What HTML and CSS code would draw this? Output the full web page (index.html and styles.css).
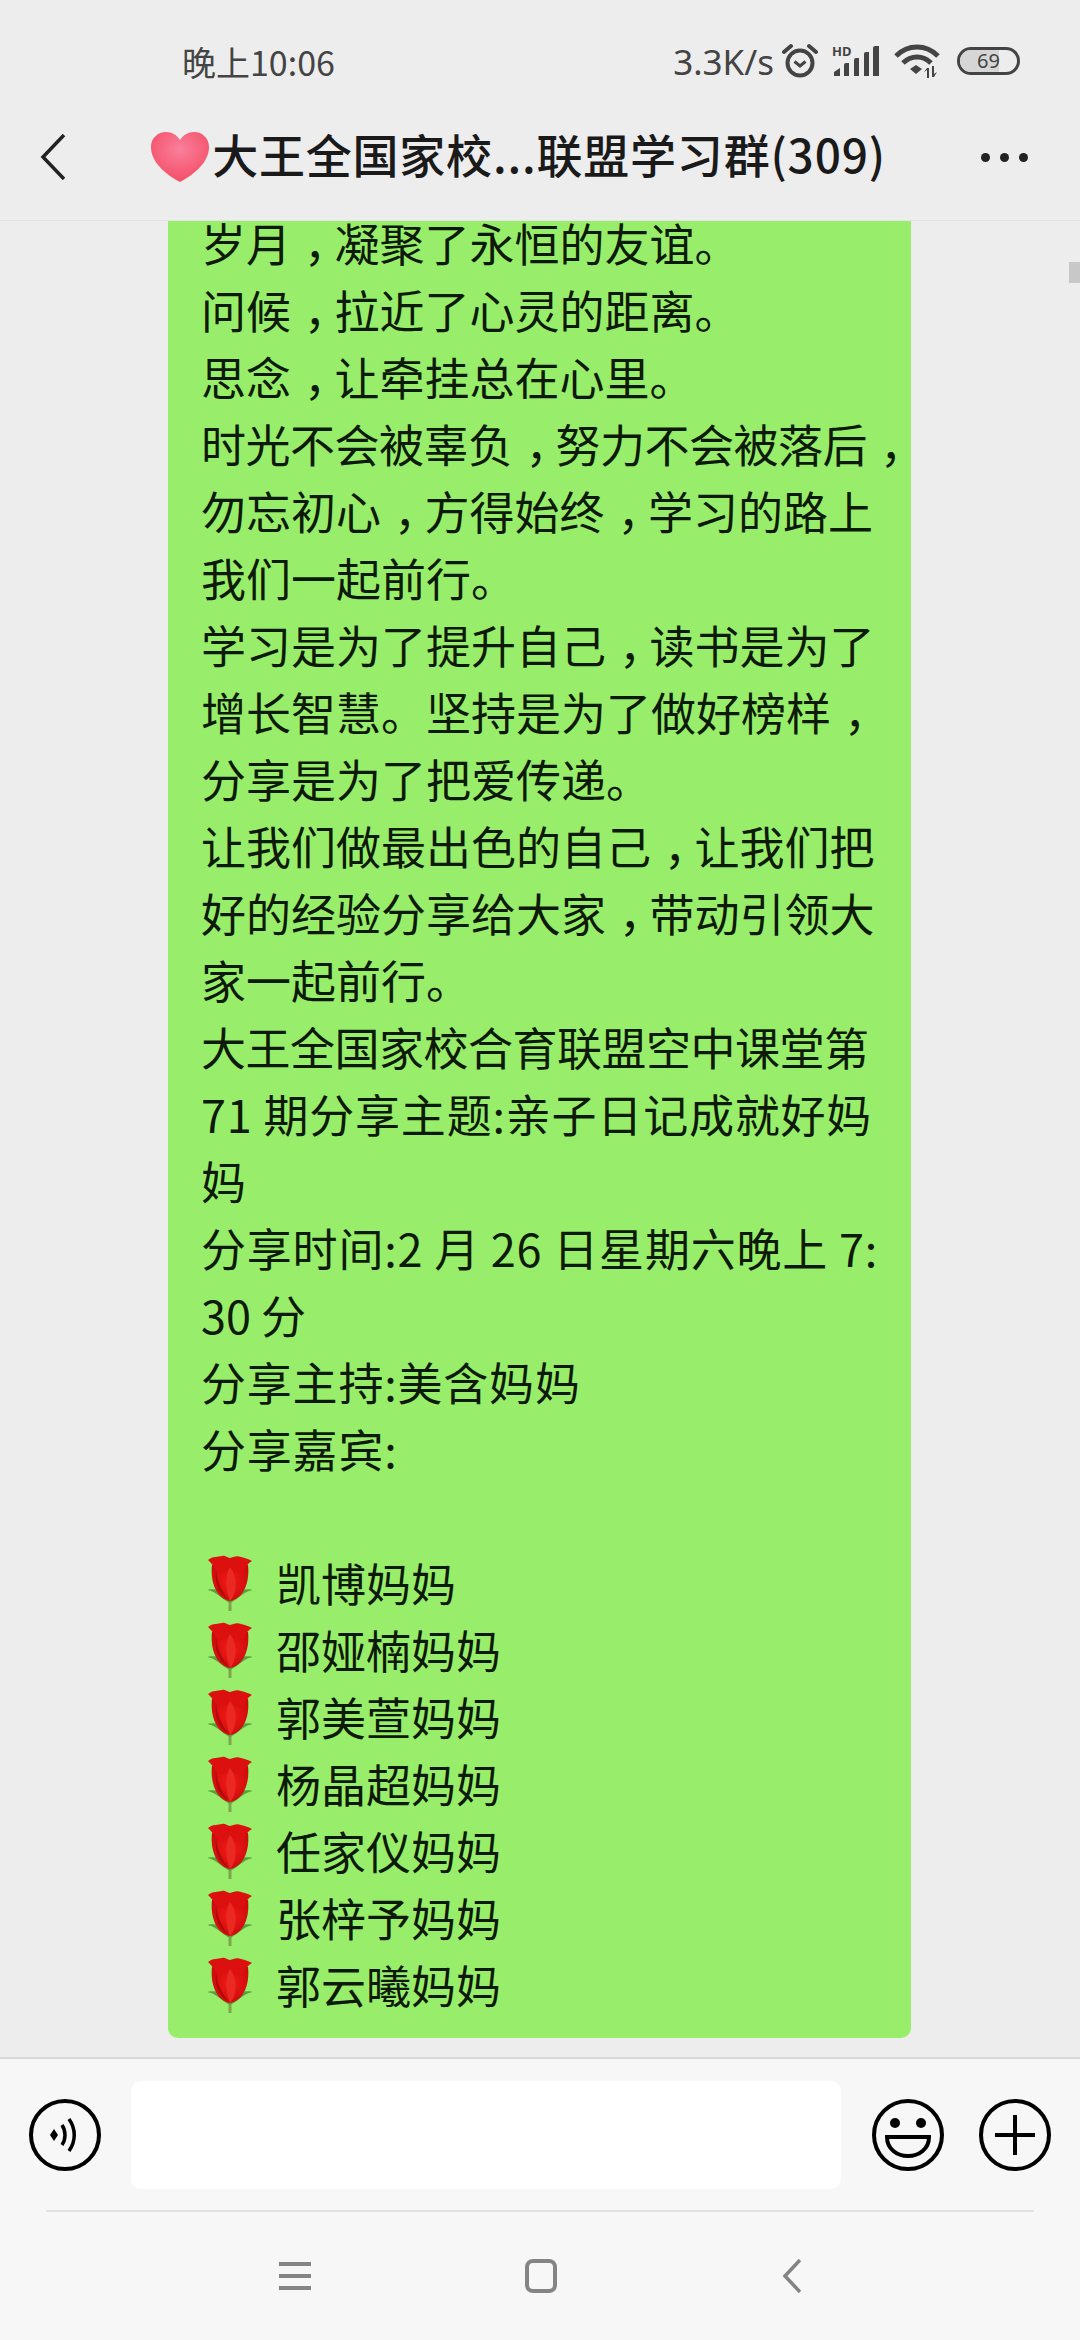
FILE: index.html
```html
<!DOCTYPE html>
<html lang="zh-CN">
<head>
  <meta charset="UTF-8">
  <meta name="viewport" content="width=device-width, initial-scale=1.0">
  <title>大王全国家校合育联盟学习群</title>
  <link rel="stylesheet" href="styles.css">
</head>
<body>
  <svg class="defs" width="0" height="0">
    <defs>
      <radialGradient id="petal" cx="50%" cy="45%" r="60%">
        <stop offset="0" stop-color="#f41a16"/>
        <stop offset="1" stop-color="#c80c0c"/>
      </radialGradient>
      <radialGradient id="heartFill" cx="50%" cy="35%" r="65%">
        <stop offset="0" stop-color="#f9809c"/>
        <stop offset="1" stop-color="#f54d66"/>
      </radialGradient>
      <symbol id="rose" viewBox="0 0 44 56">
        <path d="M22 56V42" stroke="#7fa64a" stroke-width="3" fill="none"/>
        <path d="M-1 35C8 36 14 44 22 48C30 44 36 36 45 35C36 33 30 36 22 38C14 36 8 33 -1 35Z" fill="#5aa040"/>
        <path d="M4 10C2 28 9 44 22 46C35 44 42 28 40 10Z" fill="url(#petal)"/>
        <path d="M0 5C5 1 10 2 14 1C17 0 19 3 22 3C25 2 29 0 33 2C37 3 41 4 44 6C40 8 38 11 36 16C30 20 26 18 22 12C18 18 12 20 8 15C6 11 3 8 0 5Z" fill="#dd1010"/>
        <path d="M22 12C17 20 17 34 22 46C29 38 30 22 22 12Z" fill="#ea2a22"/>
        <path d="M8 15C9 24 12 34 20 44C11 40 6 28 8 15Z" fill="#b00a0a"/>
      </symbol>
    </defs>
  </svg>

  <div class="phone">
    <header class="topbar">
      <div class="status">
        <span class="time">晚上10:06</span>
        <div class="status-right">
          <span class="speed">3.3K/s</span>
          <svg class="ic-alarm" width="36" height="36" viewBox="0 0 36 36">
            <circle cx="18" cy="20" r="12.5" fill="none" stroke="#444" stroke-width="4"/>
            <path d="M12.5 18.5L18 23L23.5 18.5" fill="none" stroke="#444" stroke-width="3"/>
            <path d="M2 9L9 3M34 9L27 3" stroke="#444" stroke-width="4" stroke-linecap="round"/>
          </svg>
          <svg class="ic-signal" width="48" height="32" viewBox="0 0 48 32">
            <text class="hd" x="0" y="11">HD</text>
            <path d="M2 31V27L8 23V31ZM12 31V20Q12 18 14 18H17V31ZM22 31V15Q22 13 24 13H27V31ZM32 31V9Q32 7 34 7H37V31ZM41 31V3Q41 1 43 1H47V31Z" fill="#444"/>
          </svg>
          <svg class="ic-wifi" width="46" height="34" viewBox="0 0 46 34">
            <path d="M2 12C14 0 32 0 44 12M9 19C17 11 29 11 37 19" fill="none" stroke="#444" stroke-width="5"/>
            <path d="M16 25L22 21L28 25L22 30Z" fill="#444"/>
            <path d="M33 34V26L30 28L33 24H35V34ZM38 22H40V30L43 28L40 33H38Z" fill="#444"/>
          </svg>
          <div class="battery"><span class="battery-level"></span><span class="battery-num">69</span></div>
        </div>
      </div>
      <div class="titlebar">
        <svg class="ic-back" width="26" height="46" viewBox="0 0 26 46">
          <path d="M24 1L3 23L24 45" fill="none" stroke="#222" stroke-width="3.5"/>
        </svg>
        <div class="title">
          <svg class="ic-heart" width="58" height="50" viewBox="0 0 58 50">
            <path d="M29 50C18 44 0 32 0 15C0 6 7 0 15 0C21 0 26 3 29 8C32 3 37 0 43 0C51 0 58 6 58 15C58 32 40 44 29 50Z" fill="url(#heartFill)"/>
          </svg>
          <span class="title-text">大王全国家校...联盟学习群(309)</span>
        </div>
        <div class="more"><i></i><i></i><i></i></div>
      </div>
    </header>

    <main class="chat">
      <div class="scrollbar"></div>
      <div class="bubble">
        <div>岁月<span class="comma">，</span>凝聚了永恒的友谊。</div>
        <div>问候<span class="comma">，</span>拉近了心灵的距离。</div>
        <div>思念<span class="comma">，</span>让牵挂总在心里。</div>
        <div class="tight">时光不会被辜负<span class="comma">，</span>努力不会被落后<span class="comma">，</span></div>
        <div>勿忘初心<span class="comma">，</span>方得始终<span class="comma">，</span>学习的路上</div>
        <div>我们一起前行。</div>
        <div>学习是为了提升自己<span class="comma">，</span>读书是为了</div>
        <div>增长智慧。坚持是为了做好榜样<span class="comma">，</span></div>
        <div>分享是为了把爱传递。</div>
        <div>让我们做最出色的自己<span class="comma">，</span>让我们把</div>
        <div>好的经验分享给大家<span class="comma">，</span>带动引领大</div>
        <div>家一起前行。</div>
        <div class="tight">大王全国家校合育联盟空中课堂第</div>
        <div class="spaced">71 期分享主题:亲子日记成就好妈</div>
        <div>妈</div>
        <div class="spaced">分享时间:2 月 26 日星期六晚上 7:</div>
        <div>30 分</div>
        <div class="spaced">分享主持:美含妈妈</div>
        <div class="spaced">分享嘉宾:</div>
        <div class="blank"></div>
        <div class="guest"><svg class="rose"><use href="#rose"/></svg>凯博妈妈</div>
        <div class="guest"><svg class="rose"><use href="#rose"/></svg>邵娅楠妈妈</div>
        <div class="guest"><svg class="rose"><use href="#rose"/></svg>郭美萱妈妈</div>
        <div class="guest"><svg class="rose"><use href="#rose"/></svg>杨晶超妈妈</div>
        <div class="guest"><svg class="rose"><use href="#rose"/></svg>任家仪妈妈</div>
        <div class="guest"><svg class="rose"><use href="#rose"/></svg>张梓予妈妈</div>
        <div class="guest"><svg class="rose"><use href="#rose"/></svg>郭云曦妈妈</div>
      </div>
    </main>

    <footer class="bottom">
      <div class="input-row">
        <svg class="round-icon" width="72" height="72" viewBox="0 0 72 72">
          <circle cx="36" cy="36" r="34" fill="none" stroke="#000" stroke-width="4"/>
          <path d="M25 30L21 36L25 42L29 36Z" fill="#000"/>
          <path d="M33 26C37 32 37 40 33 46M40 20C47 30 47 42 40 52" fill="none" stroke="#000" stroke-width="3.5"/>
        </svg>
        <div class="input-box"></div>
        <svg class="round-icon" width="72" height="72" viewBox="0 0 72 72">
          <circle cx="36" cy="36" r="34" fill="none" stroke="#000" stroke-width="4"/>
          <circle cx="23" cy="24" r="5" fill="#000"/>
          <circle cx="49" cy="24" r="5" fill="#000"/>
          <path d="M15 38H57C57 50 47 57 36 57C25 57 15 50 15 38Z" fill="none" stroke="#000" stroke-width="4"/>
        </svg>
        <svg class="round-icon" width="72" height="72" viewBox="0 0 72 72">
          <circle cx="36" cy="36" r="34" fill="none" stroke="#000" stroke-width="4"/>
          <path d="M36 16V56M16 36H56" stroke="#000" stroke-width="4"/>
        </svg>
      </div>
      <div class="divider"></div>
      <nav class="sysnav">
        <svg width="32" height="30" viewBox="0 0 32 30">
          <path d="M0 3H32M0 15H32M0 27H32" stroke="#848484" stroke-width="4"/>
        </svg>
        <svg class="nav-home" width="32" height="34" viewBox="0 0 32 34">
          <rect x="2" y="2" width="28" height="30" rx="6" fill="none" stroke="#848484" stroke-width="4"/>
        </svg>
        <svg class="nav-back" width="18" height="34" viewBox="0 0 18 34">
          <path d="M17 1L2 17L17 33" fill="none" stroke="#848484" stroke-width="3.5"/>
        </svg>
      </nav>
    </footer>
  </div>
</body>
</html>
```

FILE: styles.css
```css
* {
  box-sizing: border-box;
  margin: 0;
  padding: 0;
}

body {
  font-family: "Noto Sans CJK SC", "Noto Sans", sans-serif;
  background-color: #ededed;
  color: #111;
}

.defs {
  position: absolute;
}

.phone {
  width: 1080px;
  height: 2340px;
  display: flex;
  flex-direction: column;
  overflow: hidden;
}

.topbar {
  height: 221px;
  flex-shrink: 0;
  background-color: #ededed;
  border-bottom: 1px solid #e4e4e4;
}

.status {
  height: 110px;
  padding: 12px 60px 0 182px;
  display: flex;
  align-items: center;
  justify-content: space-between;
  color: #444;
}

.time {
  font-size: 34px;
}

.status-right {
  display: flex;
  align-items: center;
}

.speed {
  font-size: 35px;
  font-family: "Noto Sans", sans-serif;
}

.ic-alarm {
  margin-left: 8px;
}

.ic-signal {
  margin-left: 14px;
}

.hd {
  font-family: "Noto Sans", sans-serif;
  font-size: 13px;
  font-weight: 700;
  fill: #444;
}

.ic-wifi {
  margin-left: 14px;
}

.battery {
  position: relative;
  width: 63px;
  height: 28px;
  margin-left: 17px;
  border: 3px solid #444;
  border-radius: 14px;
  overflow: hidden;
  text-align: center;
}

.battery-level {
  position: absolute;
  left: 0;
  top: 0;
  bottom: 0;
  width: 69%;
  background-color: #d6d6d6;
}

.battery-num {
  position: relative;
  font-family: "Noto Sans", sans-serif;
  font-size: 20px;
  line-height: 22px;
  display: block;
  color: #444;
}

.titlebar {
  height: 94px;
  padding: 0 52px 0 40px;
  display: flex;
  align-items: center;
  justify-content: space-between;
}

.title {
  display: flex;
  align-items: center;
  margin-right: 10px;
  font-size: 46px;
  font-weight: 500;
  letter-spacing: 0.8px;
  color: #1a1a1a;
  white-space: nowrap;
}

.title-text {
  margin-bottom: 8px;
}

.ic-heart {
  margin-right: 3px;
}

.more {
  display: flex;
  gap: 10px;
}

.more i {
  display: block;
  width: 9px;
  height: 9px;
  border-radius: 50%;
  background-color: #222;
}

.chat {
  position: relative;
  flex: 1;
  background-color: #ededed;
  padding-left: 168px;
}

.scrollbar {
  position: absolute;
  right: 0;
  top: 41px;
  width: 11px;
  height: 21px;
  background-color: #c8c8c8;
}

.bubble {
  display: flow-root;
  width: 743px;
  padding: 0 20px 20px 33px;
  background-color: #98ee6a;
  border-radius: 0 0 10px 10px;
  font-size: 45px;
  line-height: 67px;
  color: #0c1a06;
  white-space: nowrap;
}

/* first line is scrolled partly under the title bar */
.bubble > div:first-child {
  margin-top: -12px;
}

/* the comma sits mid-cell in the screenshot, not at the left of it */
.comma {
  font-feature-settings: "halt";
  padding: 0 8px 0 13px;
}

.spaced {
  letter-spacing: 0.8px;
}

.tight {
  letter-spacing: -0.5px;
}

.blank {
  height: 67px;
}

.guest {
  display: flex;
  align-items: center;
}

.rose {
  width: 44px;
  height: 56px;
  margin: 0 24px 0 7px;
  flex-shrink: 0;
}

.bottom {
  height: 283px;
  flex-shrink: 0;
  background-color: #f7f7f7;
  border-top: 2px solid #d8d8d8;
}

.input-row {
  height: 151px;
  padding: 0 29px 0;
  display: flex;
  align-items: center;
}

.round-icon {
  flex-shrink: 0;
}

.input-box {
  width: 710px;
  height: 108px;
  margin: 0 31px 0 30px;
  background-color: #fff;
  border-radius: 10px;
}

.round-icon + .round-icon {
  margin-left: 35px;
}

.divider {
  height: 2px;
  margin: 0 46px;
  background-color: #e2e2e2;
}

.sysnav {
  height: 128px;
  padding-left: 279px;
  display: flex;
  align-items: center;
}

.nav-home {
  margin-left: 214px;
}

.nav-back {
  margin-left: 226px;
}
```
